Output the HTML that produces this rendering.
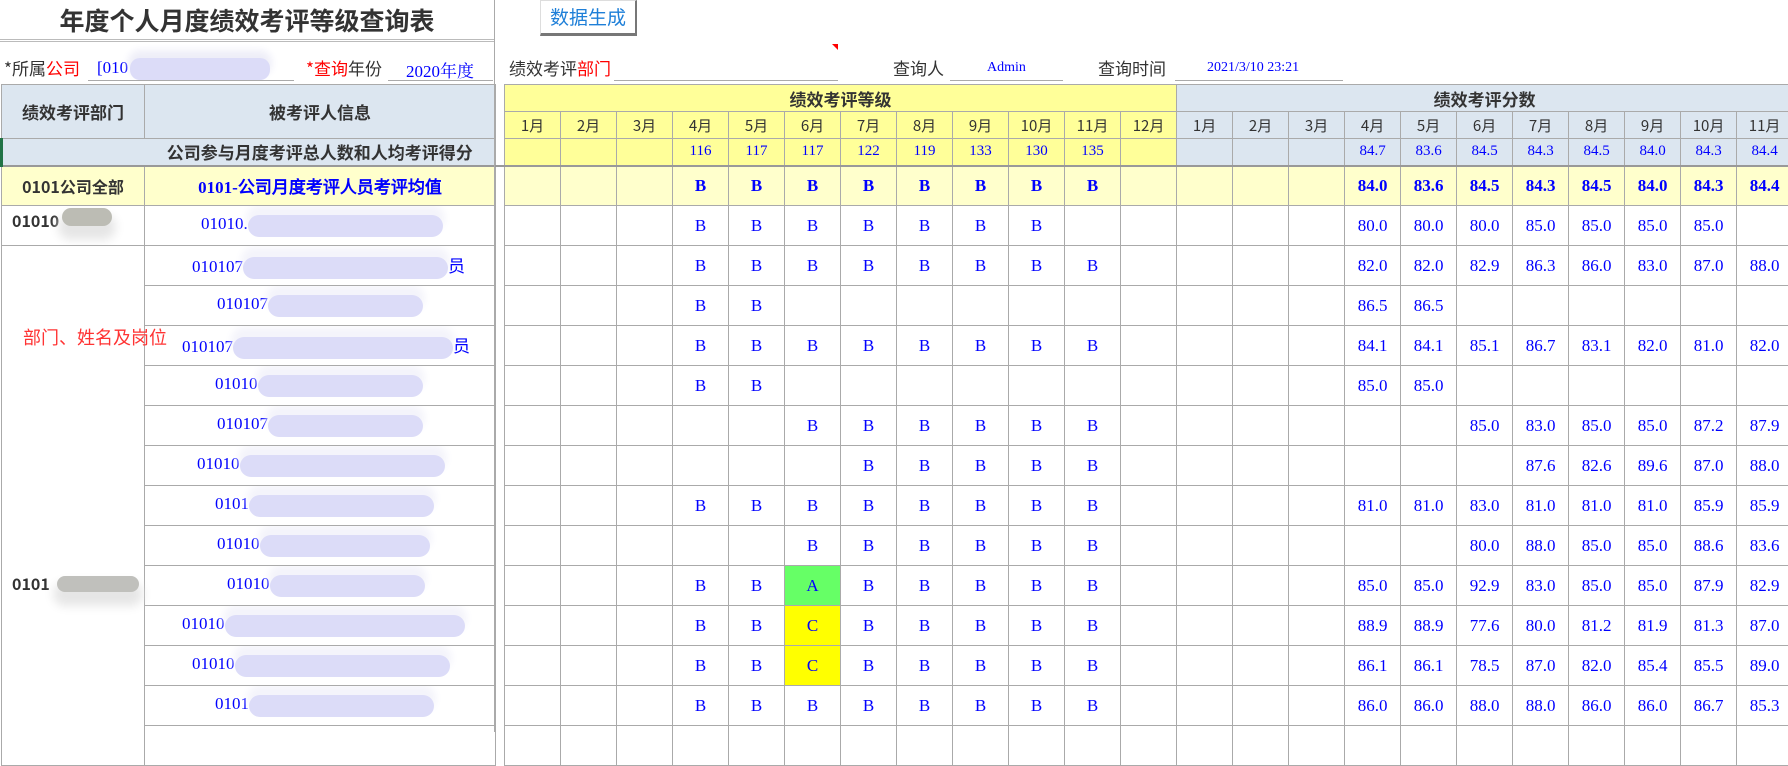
<!DOCTYPE html>
<html><head><meta charset="utf-8">
<style>
*{margin:0;padding:0;box-sizing:border-box}
body{width:1788px;height:732px;overflow:hidden;background:#fff;position:relative;font-family:"Liberation Sans","Noto Sans CJK SC",sans-serif;color:#333}
.abs{position:absolute;white-space:nowrap}
.title{left:0;width:494px;top:4px;text-align:center;font-size:25px;font-weight:bold;color:#333;font-family:"Noto Sans CJK SC",sans-serif;line-height:32px}
.vsep{left:494px;top:0;width:1px;height:84px;background:#aaa}
.hl{height:1px;background:#bbb}
.lbl{font-size:17px;color:#333;font-family:"Noto Sans CJK SC",sans-serif;line-height:20px}
.red{color:#f00}
.blue{color:#00f;font-family:"Liberation Serif","Noto Serif CJK SC",serif}
.ul{height:1px;background:#aaa}
.btn{left:540px;top:0;width:97px;height:36px;border:1px solid #ddd;border-right:2px solid #777;border-bottom:3px solid #777;color:#1e7fd8;font-size:19px;line-height:32px;text-align:center;font-family:"Noto Sans CJK SC",sans-serif;background:#fff}
table{position:absolute;left:0;top:84px;border-collapse:collapse;table-layout:fixed;width:1791px}
td{border:1px solid #aaa;text-align:center;vertical-align:middle;overflow:hidden;white-space:nowrap;padding:0}
tr.d td{height:40px;font-family:"Liberation Serif",serif;color:#00f;font-size:17px}
.hb{background:#dce6f0}
.hy{background:#ffff99}
.yr td{background:#ffffcc}
.hd{font-family:"Noto Sans CJK SC",sans-serif;font-weight:bold;font-size:17px;color:#333}
.mo{font-family:"Noto Sans CJK SC",sans-serif;font-size:15px;color:#333;height:27px}
.cv{font-family:"Liberation Serif",serif;color:#00f;font-size:15px}
td.g{border:none;background:#fff}
td.nm{text-align:left;font-family:"Liberation Serif",serif;color:#00f;font-size:17px}
.blob{display:inline-block;height:22px;vertical-align:middle;background:#dcdcf8;border-radius:11px;box-shadow:0 -8px 8px 2px #f4f4fb}
.gblob{position:absolute;background:#bcbcb4;border-radius:12px;box-shadow:0 10px 10px 4px #e6e6e6}
.A{background:#66ff66!important}
.C{background:#ffff00!important}
b{font-weight:bold}
</style></head><body>
<div class="abs title">年度个人月度绩效考评等级查询表</div>
<div class="abs hl" style="left:0;top:39px;width:494px"></div>
<div class="abs hl" style="left:0;top:41px;width:494px"></div>
<div class="abs vsep"></div>
<div class="abs btn">数据生成</div>

<div class="abs lbl" style="left:4px;top:58px">*所属<span class="red">公司</span></div>
<div class="abs blue" style="left:97px;top:58px;font-size:17px">[010</div>
<div class="abs" style="left:130px;top:58px;width:140px;height:22px;background:#dcdcf8;border-radius:10px;box-shadow:0 -6px 8px 2px #eeeef8"></div>
<div class="abs ul" style="left:88px;top:80px;width:206px"></div>
<div class="abs lbl" style="left:306px;top:58px"><span class="red">*查询</span>年份</div>
<div class="abs blue" style="left:406px;top:57px;font-size:17px">2020年度</div>
<div class="abs ul" style="left:388px;top:80px;width:105px"></div>

<div class="abs lbl" style="left:509px;top:58px">绩效考评<span class="red">部门</span></div>
<div class="abs ul" style="left:614px;top:80px;width:224px"></div>
<div class="abs" style="left:832px;top:44px;width:0;height:0;border-left:6px solid transparent;border-top:6px solid #f00"></div>
<div class="abs lbl" style="left:893px;top:58px">查询人</div>
<div class="abs blue" style="left:987px;top:60px;font-size:14px">Admin</div>
<div class="abs ul" style="left:950px;top:80px;width:113px"></div>
<div class="abs lbl" style="left:1098px;top:58px">查询时间</div>
<div class="abs blue" style="left:1207px;top:60px;font-size:14px">2021/3/10 23:21</div>
<div class="abs ul" style="left:1175px;top:80px;width:168px"></div>

<table>
<colgroup><col style="width:143px"><col style="width:351px"><col style="width:9px">
<col style="width:56px"><col style="width:56px"><col style="width:56px"><col style="width:56px"><col style="width:56px"><col style="width:56px"><col style="width:56px"><col style="width:56px"><col style="width:56px"><col style="width:56px"><col style="width:56px"><col style="width:56px">
<col style="width:56px"><col style="width:56px"><col style="width:56px"><col style="width:56px"><col style="width:56px"><col style="width:56px"><col style="width:56px"><col style="width:56px"><col style="width:56px"><col style="width:56px"><col style="width:56px">
</colgroup>
<tr style="height:27px"><td class="hb hd" rowspan="2">绩效考评部门</td><td class="hb hd" rowspan="2">被考评人信息</td><td class="g"></td>
<td class="hy hd" colspan="12">绩效考评等级</td><td class="hb hd" colspan="11">绩效考评分数</td></tr>
<tr style="height:27px"><td class="g"></td>
<td class="hy mo">1月</td><td class="hy mo">2月</td><td class="hy mo">3月</td><td class="hy mo">4月</td><td class="hy mo">5月</td><td class="hy mo">6月</td><td class="hy mo">7月</td><td class="hy mo">8月</td><td class="hy mo">9月</td><td class="hy mo">10月</td><td class="hy mo">11月</td><td class="hy mo">12月</td>
<td class="hb mo">1月</td><td class="hb mo">2月</td><td class="hb mo">3月</td><td class="hb mo">4月</td><td class="hb mo">5月</td><td class="hb mo">6月</td><td class="hb mo">7月</td><td class="hb mo">8月</td><td class="hb mo">9月</td><td class="hb mo">10月</td><td class="hb mo">11月</td></tr>
<tr style="height:27px;border-bottom:2px solid #999"><td class="hb" style="border-right:none;border-left:3px solid #217346"></td><td class="hb hd" style="border-left:none">公司参与月度考评总人数和人均考评得分</td><td class="g" style="border-bottom:1px solid #999"></td>
<td class="hy"></td><td class="hy"></td><td class="hy"></td><td class="hy cv">116</td><td class="hy cv">117</td><td class="hy cv">117</td><td class="hy cv">122</td><td class="hy cv">119</td><td class="hy cv">133</td><td class="hy cv">130</td><td class="hy cv">135</td><td class="hy"></td>
<td class="hb"></td><td class="hb"></td><td class="hb"></td><td class="hb cv">84.7</td><td class="hb cv">83.6</td><td class="hb cv">84.5</td><td class="hb cv">84.3</td><td class="hb cv">84.5</td><td class="hb cv">84.0</td><td class="hb cv">84.3</td><td class="hb cv">84.4</td></tr>

<tr class="d yr"><td class="hd" style="font-size:16px;color:#333;font-family:'Noto Sans CJK SC',sans-serif">0101公司全部</td><td><b>0101-公司月度考评人员考评均值</b></td><td class="g" style="background:#fff"></td>
<td></td><td></td><td></td><td><b>B</b></td><td><b>B</b></td><td><b>B</b></td><td><b>B</b></td><td><b>B</b></td><td><b>B</b></td><td><b>B</b></td><td><b>B</b></td><td></td>
<td></td><td></td><td></td><td><b>84.0</b></td><td><b>83.6</b></td><td><b>84.5</b></td><td><b>84.3</b></td><td><b>84.5</b></td><td><b>84.0</b></td><td><b>84.3</b></td><td><b>84.4</b></td></tr>

<tr class="d"><td style="vertical-align:top;text-align:left;padding:2px 0 0 10px;font-family:'Noto Sans CJK SC',sans-serif;font-weight:bold;color:#333;font-size:16px;position:relative">01010<span class="gblob" style="left:60px;top:2px;width:50px;height:18px"></span></td>
<td class="nm" style="padding-left:56px">01010.<span class="blob" style="width:195px"></span></td><td class="g"></td>
<td></td><td></td><td></td><td>B</td><td>B</td><td>B</td><td>B</td><td>B</td><td>B</td><td>B</td><td></td><td></td>
<td></td><td></td><td></td><td>80.0</td><td>80.0</td><td>80.0</td><td>85.0</td><td>85.0</td><td>85.0</td><td>85.0</td><td></td></tr>

<tr class="d"><td rowspan="13" style="vertical-align:top;text-align:left;position:relative;overflow:visible">
<div style="position:absolute;left:21px;top:78px;color:#f33;font-size:18px;font-family:'Noto Sans CJK SC',sans-serif;white-space:nowrap;z-index:3">部门、姓名及岗位</div>
<div style="position:absolute;left:10px;top:325px;font-family:'Noto Sans CJK SC',sans-serif;font-weight:bold;color:#333;font-size:16px">0101</div>
<div class="gblob" style="left:55px;top:330px;width:82px;height:16px;background:#c0c0bc"></div>
</td>
<td class="nm" style="padding-left:47px">010107<span class="blob" style="width:205px"></span>员</td><td class="g"></td>
<td></td><td></td><td></td><td>B</td><td>B</td><td>B</td><td>B</td><td>B</td><td>B</td><td>B</td><td>B</td><td></td>
<td></td><td></td><td></td><td>82.0</td><td>82.0</td><td>82.9</td><td>86.3</td><td>86.0</td><td>83.0</td><td>87.0</td><td>88.0</td></tr>

<tr class="d"><td class="nm" style="padding-left:72px">010107<span class="blob" style="width:155px"></span></td><td class="g"></td>
<td></td><td></td><td></td><td>B</td><td>B</td><td></td><td></td><td></td><td></td><td></td><td></td><td></td>
<td></td><td></td><td></td><td>86.5</td><td>86.5</td><td></td><td></td><td></td><td></td><td></td><td></td></tr>

<tr class="d"><td class="nm" style="padding-left:37px">010107<span class="blob" style="width:220px"></span>员</td><td class="g"></td>
<td></td><td></td><td></td><td>B</td><td>B</td><td>B</td><td>B</td><td>B</td><td>B</td><td>B</td><td>B</td><td></td>
<td></td><td></td><td></td><td>84.1</td><td>84.1</td><td>85.1</td><td>86.7</td><td>83.1</td><td>82.0</td><td>81.0</td><td>82.0</td></tr>

<tr class="d"><td class="nm" style="padding-left:70px">01010<span class="blob" style="width:165px"></span></td><td class="g"></td>
<td></td><td></td><td></td><td>B</td><td>B</td><td></td><td></td><td></td><td></td><td></td><td></td><td></td>
<td></td><td></td><td></td><td>85.0</td><td>85.0</td><td></td><td></td><td></td><td></td><td></td><td></td></tr>

<tr class="d"><td class="nm" style="padding-left:72px">010107<span class="blob" style="width:155px"></span></td><td class="g"></td>
<td></td><td></td><td></td><td></td><td></td><td>B</td><td>B</td><td>B</td><td>B</td><td>B</td><td>B</td><td></td>
<td></td><td></td><td></td><td></td><td></td><td>85.0</td><td>83.0</td><td>85.0</td><td>85.0</td><td>87.2</td><td>87.9</td></tr>

<tr class="d"><td class="nm" style="padding-left:52px">01010<span class="blob" style="width:205px"></span></td><td class="g"></td>
<td></td><td></td><td></td><td></td><td></td><td></td><td>B</td><td>B</td><td>B</td><td>B</td><td>B</td><td></td>
<td></td><td></td><td></td><td></td><td></td><td></td><td>87.6</td><td>82.6</td><td>89.6</td><td>87.0</td><td>88.0</td></tr>

<tr class="d"><td class="nm" style="padding-left:70px">0101<span class="blob" style="width:185px"></span></td><td class="g"></td>
<td></td><td></td><td></td><td>B</td><td>B</td><td>B</td><td>B</td><td>B</td><td>B</td><td>B</td><td>B</td><td></td>
<td></td><td></td><td></td><td>81.0</td><td>81.0</td><td>83.0</td><td>81.0</td><td>81.0</td><td>81.0</td><td>85.9</td><td>85.9</td></tr>

<tr class="d"><td class="nm" style="padding-left:72px">01010<span class="blob" style="width:170px"></span></td><td class="g"></td>
<td></td><td></td><td></td><td></td><td></td><td>B</td><td>B</td><td>B</td><td>B</td><td>B</td><td>B</td><td></td>
<td></td><td></td><td></td><td></td><td></td><td>80.0</td><td>88.0</td><td>85.0</td><td>85.0</td><td>88.6</td><td>83.6</td></tr>

<tr class="d"><td class="nm" style="padding-left:82px">01010<span class="blob" style="width:155px"></span></td><td class="g"></td>
<td></td><td></td><td></td><td>B</td><td>B</td><td class="A">A</td><td>B</td><td>B</td><td>B</td><td>B</td><td>B</td><td></td>
<td></td><td></td><td></td><td>85.0</td><td>85.0</td><td>92.9</td><td>83.0</td><td>85.0</td><td>85.0</td><td>87.9</td><td>82.9</td></tr>

<tr class="d"><td class="nm" style="padding-left:37px">01010<span class="blob" style="width:240px"></span></td><td class="g"></td>
<td></td><td></td><td></td><td>B</td><td>B</td><td class="C">C</td><td>B</td><td>B</td><td>B</td><td>B</td><td>B</td><td></td>
<td></td><td></td><td></td><td>88.9</td><td>88.9</td><td>77.6</td><td>80.0</td><td>81.2</td><td>81.9</td><td>81.3</td><td>87.0</td></tr>

<tr class="d"><td class="nm" style="padding-left:47px">01010<span class="blob" style="width:215px"></span></td><td class="g"></td>
<td></td><td></td><td></td><td>B</td><td>B</td><td class="C">C</td><td>B</td><td>B</td><td>B</td><td>B</td><td>B</td><td></td>
<td></td><td></td><td></td><td>86.1</td><td>86.1</td><td>78.5</td><td>87.0</td><td>82.0</td><td>85.4</td><td>85.5</td><td>89.0</td></tr>

<tr class="d"><td class="nm" style="padding-left:70px">0101<span class="blob" style="width:185px"></span></td><td class="g"></td>
<td></td><td></td><td></td><td>B</td><td>B</td><td>B</td><td>B</td><td>B</td><td>B</td><td>B</td><td>B</td><td></td>
<td></td><td></td><td></td><td>86.0</td><td>86.0</td><td>88.0</td><td>88.0</td><td>86.0</td><td>86.0</td><td>86.7</td><td>85.3</td></tr>

<tr class="d"><td class="nm"></td><td class="g"></td>
<td></td><td></td><td></td><td></td><td></td><td></td><td></td><td></td><td></td><td></td><td></td><td></td>
<td></td><td></td><td></td><td></td><td></td><td></td><td></td><td></td><td></td><td></td><td></td></tr>
</table>
<div class="abs" style="left:494px;top:84px;width:1px;height:648px;background:#aaa"></div>
</body></html>
